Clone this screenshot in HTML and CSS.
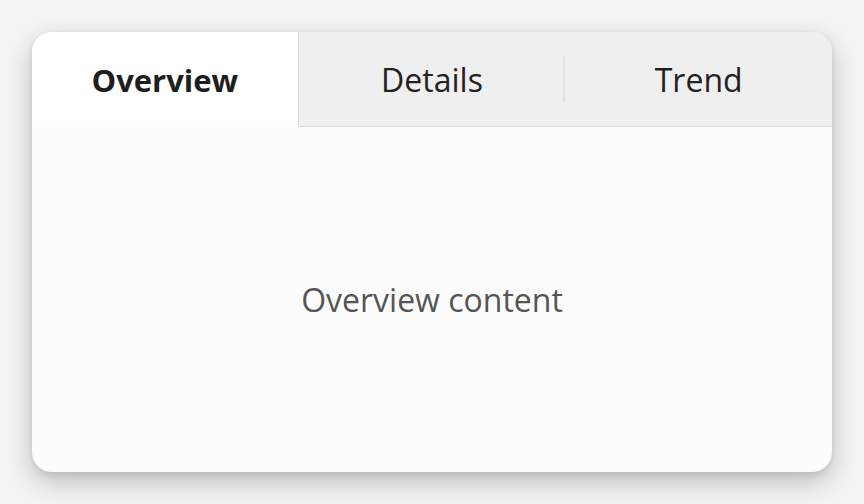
FILE: index.html
```html
<!DOCTYPE html>
<html lang="en">
<head>
<meta charset="utf-8">
<title>Tabs</title>
<link rel="stylesheet" href="styles.css">
</head>
<body>
<div class="card">
  <div class="tabs">
    <div class="tab active">Overview</div>
    <div class="tab divided">Details</div>
    <div class="tab">Trend</div>
  </div>
  <div class="panel">Overview content</div>
</div>
</body>
</html>
```
FILE: styles.css
```css
html, body {
  margin: 0;
  padding: 0;
  background: #f3f3f3;
  font-family: "Open Sans", "Noto Sans", sans-serif;
}
body {
  padding: 32px;
  width: 800px;
  height: 440px;
}
.card {
  width: 800px;
  height: 440px;
  border-radius: 20px;
  background: #fcfcfc;
  box-shadow: 0 10px 24px rgba(0, 0, 0, 0.22), 0 2px 6px rgba(0, 0, 0, 0.08);
  overflow: hidden;
  display: flex;
  flex-direction: column;
}
.tabs {
  display: grid;
  grid-template-columns: 1fr 1fr 1fr;
  height: 95px;
  background: #efefef;
  flex: none;
}
.tab {
  position: relative;
  display: flex;
  align-items: center;
  justify-content: center;
  font-size: 32px;
  color: #222;
  border-bottom: 1px solid #dcdcdc;
}
.tab.active {
  background: #ffffff;
  font-weight: 700;
  font-size: 31px;
  color: #1e1e1e;
  border-right: 1px solid #dcdcdc;
  border-bottom: none;
}
.tab.divided::after {
  content: "";
  position: absolute;
  right: 0;
  top: 24px;
  bottom: 24px;
  width: 2px;
  background: #e2e2e2;
}
.panel {
  flex: 1;
  display: flex;
  align-items: center;
  justify-content: center;
  font-size: 32px;
  color: #555;
}
```
